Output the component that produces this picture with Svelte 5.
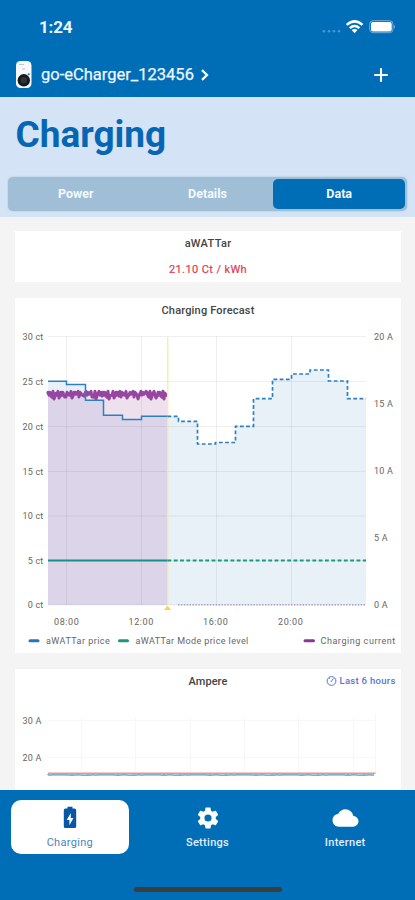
<script>
  const tabs = ['Power', 'Details', 'Data'];
  const gridY = [336.5, 381.5, 426.5, 471.5, 516, 560.5, 605];
  const gridX = [66.5, 141.5, 216.5, 291.5];
  const centLabels = ['30 ct', '25 ct', '20 ct', '15 ct', '10 ct', '5 ct', '0 ct'];
  const ampLabels = [['20 A', 336.5], ['15 A', 403.5], ['10 A', 471], ['5 A', 538], ['0 A', 605]];
  const times = [['08:00', 66.5], ['12:00', 141], ['16:00', 215.5], ['20:00', 290.5]];

  const past = 'M48 381.3H66.5V384.5H85.5V400.3H103.5V415.3H122.5V419.6H141.5V416.3H167.5';
  const futureSteps = 'H178.5V421.3H197.5V444H215.5V442.5H235.5V426.3H253.5V398.7H272.5V379.3H291.5V374H310V370H328.5V381H347.5V398.7H366';
  const future = 'M167.5 416.3' + futureSteps;
  const priceArea = past + futureSteps + 'V605H48Z';

  // Small deterministic jitter for the measured current
  const wobble = [0, 3, -1, 4, 1, 5, -1, 3, 0, 6, 1, 3, -1, 5, 0, 2, 4, -1, 3, 7, 0, 4, 1];
  let current = 'M48 394';
  for (let i = 0; i < 120; i++) {
    current += `L${48 + i} ${392.3 + wobble[(i * 7 + Math.floor(i / 9)) % wobble.length] * 0.95}`;
  }
  let phase = 'M48 775';
  for (let i = 0; i < 164; i++) {
    phase += `L${48 + i * 2} ${774.8 + (wobble[(i * 5) % wobble.length] > 3 ? 0.3 : 0)}`;
  }
</script>

<div class="app">
  <header>
    <div class="status">
      <span class="clock">1:24</span>
      <svg class="signals" width="76" height="18" viewBox="320 18 76 18">
        <g fill="#4a96cf">
          <circle cx="324" cy="31.3" r="1.3" /><circle cx="329" cy="31.3" r="1.3" />
          <circle cx="334" cy="31.3" r="1.3" /><circle cx="339" cy="31.3" r="1.3" />
        </g>
        <g fill="none" stroke="#fff" stroke-width="2.5">
          <path d="M346.7 24.9Q354.6 17.9 362.5 24.9" />
          <path d="M349.8 28.1Q354.6 24 359.4 28.1" />
        </g>
        <path d="M351.7 30Q354.6 27.8 357.5 30L354.6 33.2Z" fill="#fff" />
        <rect x="369.7" y="20.7" width="23.3" height="12" rx="3.5" fill="none" stroke="#73afdc" />
        <rect x="371" y="22" width="20.7" height="9.5" rx="2" fill="#fff" />
        <path d="M394.2 24.7Q395.7 26.7 394.2 28.7Z" fill="#a8cce8" />
      </svg>
    </div>
    <div class="device">
      <svg width="18" height="30" viewBox="0 0 18 30">
        <rect x="1" y="1" width="15.5" height="27" rx="4.5" fill="#f7f9fc" />
        <path d="M4 4.5h5M7 9h3" stroke="#bfc8d2" stroke-width="1" />
        <circle cx="13.7" cy="14.3" r="1" fill="#2468a5" />
        <circle cx="8.8" cy="20.3" r="6.2" fill="#151a1f" />
        <circle cx="8.8" cy="20.3" r="3.2" fill="#343332" />
      </svg>
      <span class="name">go-eCharger_123456</span>
      <svg class="chev" width="10" height="14" viewBox="0 0 10 14"><path d="M2 2.2L7 7L2 11.8" fill="none" stroke="#fff" stroke-width="2.3" /></svg>
      <svg class="plus" width="14" height="14" viewBox="0 0 14 14"><path d="M7 .3V13.7M.3 7H13.7" stroke="#fff" stroke-width="2.1" /></svg>
    </div>
  </header>

  <section class="title">
    <h1>Charging</h1>
    <div class="tabs">
      {#each tabs as tab}
        <div class="tab" class:active={tab === 'Data'}>{tab}</div>
      {/each}
    </div>
  </section>

  <main>
    <article class="card price">
      <h2 class="brand">aWATTar</h2>
      <p>21.10 Ct / kWh</p>
    </article>

    <article class="card">
      <svg class="chart" width="386" height="355" viewBox="15 298 386 355">
        <text class="heading" x="208" y="314" text-anchor="middle" textLength="93">Charging Forecast</text>
        <path d={priceArea} fill="#e9f1f8" />
        <rect x="48" y="394" width="119.5" height="211" fill="#a04a98" fill-opacity=".17" />
        <g stroke="#334" stroke-opacity=".08" stroke-width="1">
          {#each gridY as y}<path d="M48 {y}H366" />{/each}
          {#each gridX as x}<path d="M{x} 336V605" />{/each}
        </g>
        <path d="M167.8 337V605" stroke="#f6eaa0" stroke-width="1.2" />
        <path d={current} fill="none" stroke="#9646a0" stroke-width="3" stroke-linejoin="round" />
        <path d={past} fill="none" stroke="#2d80bf" stroke-width="1.5" />
        <path d={future} fill="none" stroke="#2d80bf" stroke-width="1.7" stroke-dasharray="3.8 2.4" />
        <path d="M48 560.5H167.5" stroke="#168f8a" stroke-width="2" />
        <path d="M167.5 560.5H366" stroke="#159a7c" stroke-width="1.8" stroke-dasharray="3.8 2.5" />
        <path d="M178 604.7H366" stroke="#a7a0c8" stroke-width="1.6" stroke-dasharray="1.4 1.5" />
        <path d="M164 610L167.5 605.5L171 610Z" fill="#f7d83c" />
        {#each centLabels as label, i}
          <text x="43.5" y={gridY[i] + 3.4} text-anchor="end">{label}</text>
        {/each}
        {#each ampLabels as [label, y]}
          <text x="374" y={y + 3.4}>{label}</text>
        {/each}
        {#each times as [label, x]}
          <text {x} y="624.5" text-anchor="middle" textLength="25">{label}</text>
        {/each}
        <g stroke-width="3" stroke-linecap="round">
          <path d="M30 640.7H38" stroke="#2475bd" />
          <path d="M119.5 640.7H127.5" stroke="#199777" />
          <path d="M305 640.7H313.5" stroke="#893794" />
        </g>
        <text x="46" y="643.7" textLength="64">aWATTar price</text>
        <text x="135.5" y="643.7" textLength="113">aWATTar Mode price level</text>
        <text x="320.5" y="643.7" textLength="75">Charging current</text>
      </svg>
    </article>

    <article class="card">
      <svg class="chart" width="386" height="121" viewBox="15 669 386 121">
        <text class="heading" x="208" y="685" text-anchor="middle" textLength="39">Ampere</text>
        <g fill="none" stroke="#5674dc" stroke-width="1">
          <circle cx="331.5" cy="681" r="4.4" />
          <path d="M330.8 682L333.5 678.5M329 678.8L330 677.9" />
        </g>
        <text class="range" x="339.5" y="684.3" textLength="56">Last 6 hours</text>
        <g stroke="#f7f7f8" stroke-width="1">
          <path d="M48 720.5H375M48 757.5H375" />
          {#each [81, 135, 190, 244, 298, 353] as x}
            <path d="M{x}.5 717V773" />
          {/each}
        </g>
        <path d="M375.5 714V773" stroke="#fcf7df" />
        <text x="41.5" y="723.7" text-anchor="end">30 A</text>
        <text x="41.5" y="760.7" text-anchor="end">20 A</text>
        <path d={phase} fill="none" stroke="#5795be" stroke-width="1.3" />
        <path d="M48 773.3H375.5" stroke="#f39384" stroke-width="1.5" />
      </svg>
    </article>
  </main>

  <nav>
    <div class="items">
      <div class="item selected">
        <svg width="26" height="24" viewBox="0 0 26 24">
          <path d="M8.5 2.5H10.5V.8H15.500V2.500H17.500Q19.200 2.500 19.200 4.200V20.500Q19.200 22 17.500 22H8.500Q6.800 22 6.800 20.500V4.200Q6.800 2.500 8.500 2.500Z" fill="#0857a6" />
          <path d="M13.800 7L9.700 14H12.400V19.200L16.500 12H13.800Z" fill="#fff" />
        </svg>
        <span>Charging</span>
      </div>
      <div class="item">
        <svg width="26" height="26" viewBox="0 0 24 24" fill="#fff">
          <path d="M19.140 12.940c.040-.300.060-.610.060-.940s-.020-.640-.070-.940l2.030-1.580c.180-.140.230-.410.120-.610l-1.920-3.320c-.120-.220-.370-.290-.590-.220l-2.390.960c-.500-.380-1.030-.700-1.620-.940l-.360-2.540c-.040-.240-.240-.410-.480-.410h-3.840c-.240 0-.430.170-.470.410l-.360 2.540c-.590.240-1.130.570-1.620.940l-2.390-.960c-.220-.080-.470 0-.590.220L2.740 8.870c-.120.210-.080.470.120.610l2.030 1.580c-.050.300-.090.630-.090.940s.020.640.070.940l-2.030 1.580c-.180.140-.230.410-.120.610l1.920 3.320c.120.220.370.290.590.220l2.390-.960c.500.380 1.030.700 1.620.940l.360 2.540c.050.240.240.410.480.410h3.840c.240 0 .440-.170.470-.410l.360-2.540c.590-.240 1.130-.560 1.620-.940l2.390.960c.220.080.470 0 .590-.220l1.920-3.320c.120-.220.070-.470-.120-.610l-2.010-1.580zM12 15.300A3.300 3.300 0 1 1 12 8.700a3.300 3.300 0 0 1 0 6.600z" />
        </svg>
        <span>Settings</span>
      </div>
      <div class="item">
        <svg width="27" height="27" viewBox="0 0 24 24" fill="#fff">
          <path d="M19.350 10.040A7.490 7.490 0 0 0 12 4C9.110 4 6.600 5.640 5.350 8.040A5.994 5.994 0 0 0 0 14c0 3.310 2.690 6 6 6h13c2.760 0 5-2.240 5-5 0-2.640-2.050-4.780-4.650-4.960z" />
        </svg>
        <span>Internet</span>
      </div>
    </div>
    <div class="home"></div>
  </nav>
</div>

<style>
  :global(body) { margin: 0; }
  .app {
    width: 415px;
    height: 900px;
    display: flex;
    flex-direction: column;
    overflow: hidden;
    background: #f4f4f4;
    font-family: Roboto, "Liberation Sans", sans-serif;
  }
  header {
    height: 97px;
    box-sizing: border-box;
    padding: 18px 20px 0 15px;
    background: #006db7;
    color: #edf5ff;
  }
  svg { display: block; flex: none; }
  .status { display: flex; align-items: flex-start; height: 42px; }
  .clock { margin-left: 24px; font-size: 17px; line-height: 19px; font-weight: 700; letter-spacing: -.2px; }
  .signals { margin-left: auto; margin-right: -1px; }
  .device { display: flex; align-items: center; height: 30px; }
  .name { margin-left: 8px; font-size: 16.5px; line-height: 20px; width: 153px; white-space: nowrap; -webkit-text-stroke: .25px #edf5ff; }
  .chev { margin-left: 6px; }
  .plus { margin-left: auto; margin-right: 7px; }
  .title {
    height: 120px;
    box-sizing: border-box;
    padding: 14px 8px 0;
    background: #d4e4f6;
  }
  h1 { margin: 0 0 0 7.5px; height: 66px; font-size: 37px; line-height: 48px; color: #0766b3; font-weight: 700; }
  .tabs {
    display: flex;
    height: 34px;
    box-sizing: border-box;
    padding: 2px;
    border-radius: 5px;
    background: #a0bfd6;
    box-shadow: 0 0 2px #a0bfd6;
  }
  .tab { flex: 1; border-radius: 5px; text-align: center; font-size: 12.5px; line-height: 30px; font-weight: 700; color: #f3f9ff; }
  .active { background: #006db7; }
  main { height: 573px; box-sizing: border-box; padding: 14px 14px 0 15px; display: flex; flex-direction: column; gap: 16px; overflow: hidden; }
  .card { flex: none; background: #fff; }
  .price { height: 51px; text-align: center; }
  h2 { margin: 0; padding-top: 5px; font-size: 11px; line-height: 15px; font-weight: 500; color: #444; letter-spacing: .3px; }
  p { margin: 11px 0 0; font-size: 11px; line-height: 15px; letter-spacing: .4px; color: #df3b51; -webkit-text-stroke: .2px #df3b51; }
  .chart text { font-size: 9px; fill: #666; letter-spacing: .2px; }
  .chart .heading { font-size: 11px; fill: #444; font-weight: 500; }
  .chart .range { font-size: 9.5px; fill: #5674dc; font-weight: 500; }
  nav { height: 110px; box-sizing: border-box; padding: 10px 11px 0; background: #006db7; }
  .items { display: flex; gap: 20px; height: 87px; }
  .item {
    width: 118px;
    height: 54px;
    box-sizing: border-box;
    padding-top: 5px;
    display: flex;
    flex-direction: column;
    align-items: center;
    border-radius: 10px;
    color: #e1efff;
    font-size: 11px;
    font-weight: 500;
  }
  .item svg { height: 26px; }
  .item span { margin-top: 5px; line-height: 14px; letter-spacing: .3px; }
  .selected { background: #fff; color: #4b85bd; font-weight: 400; }
  .home { width: 148px; height: 5px; margin: 0 auto; border-radius: 3px; background: #3b3d3c; }
</style>
